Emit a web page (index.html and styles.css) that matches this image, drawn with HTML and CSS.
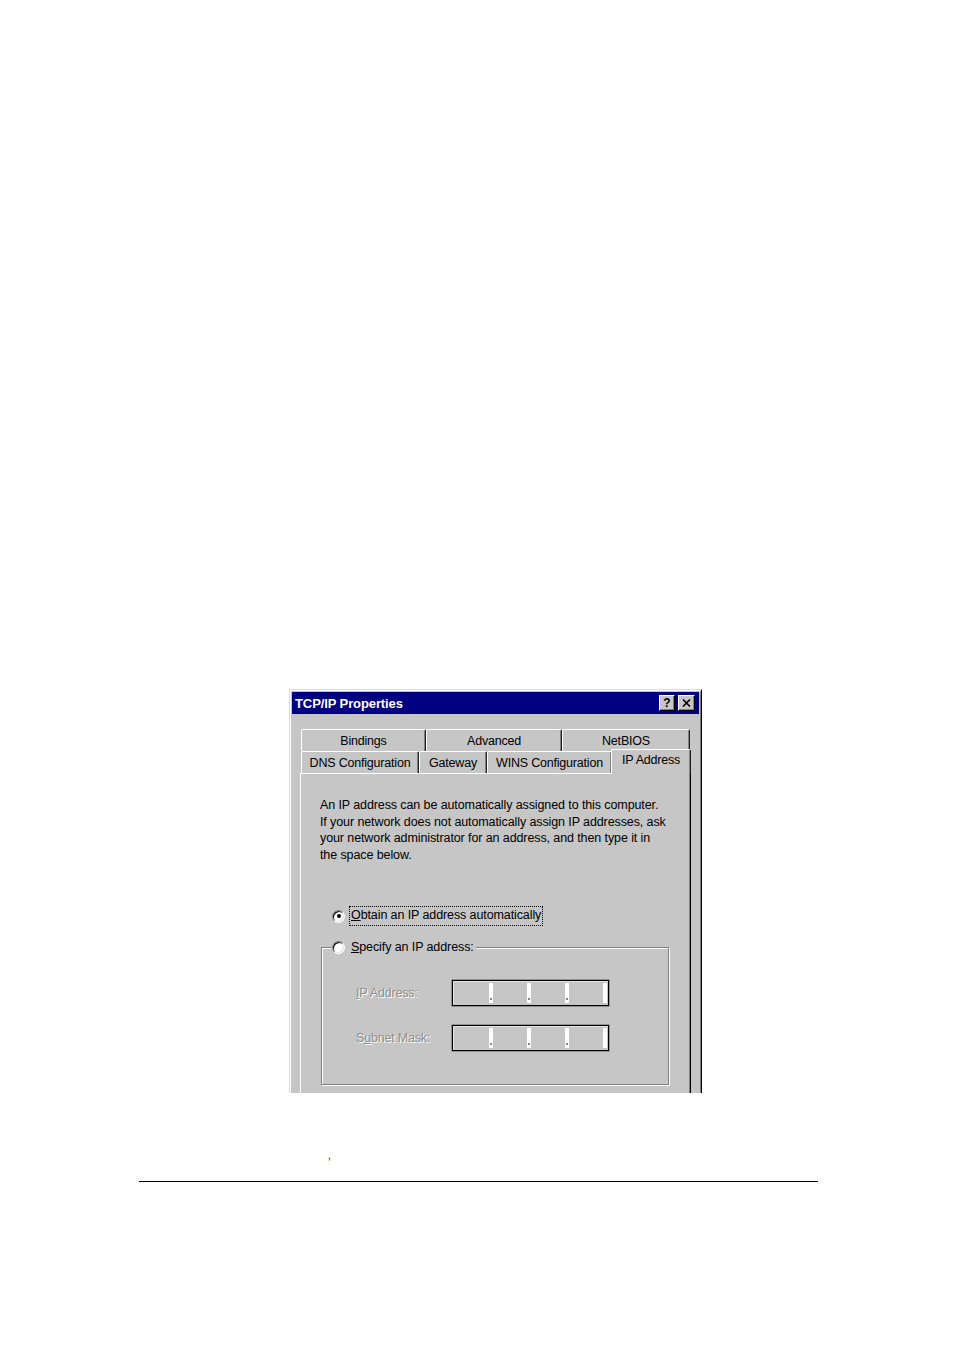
FILE: index.html
```html
<!DOCTYPE html>
<html>
<head>
<meta charset="utf-8">
<link rel="stylesheet" href="styles.css">
</head>
<body>
<div class="page">
  <div class="dialog">
    <div class="titlebar">
      <span class="title">TCP/IP Properties</span>
      <div class="tb-buttons">
        <span class="tb-btn help">?</span>
        <span class="tb-btn close"><svg width="9" height="8" viewBox="0 0 9 8"><path d="M1 0.5 L8 7.5 M8 0.5 L1 7.5" stroke="#000" stroke-width="1.6"/></svg></span>
      </div>
    </div>

    <div class="tabs">
      <div class="tab-row row1">
        <div class="tab w-bind">Bindings</div>
        <div class="tab w-adv">Advanced</div>
        <div class="tab w-net">NetBIOS</div>
      </div>
      <div class="tab-row row2">
        <div class="tab w-dns">DNS Configuration</div>
        <div class="tab w-gw">Gateway</div>
        <div class="tab w-wins">WINS Configuration</div>
        <div class="tab tab-active">IP Address</div>
      </div>
    </div>

    <div class="panel">
      <p class="intro">An IP address can be automatically assigned to this computer.<br>If your network does not automatically assign IP addresses, ask<br>your network administrator for an address, and then type it in<br>the space below.</p>

      <div class="radio-row first">
        <span class="radio checked"></span>
        <span class="focus-label"><u>O</u>btain an IP address automatically</span>
      </div>

      <fieldset class="group">
        <legend class="legend">
          <span class="radio"></span>
          <span class="plain-label"><u>S</u>pecify an IP address:</span>
        </legend>
        <div class="field-row r1">
          <span class="dis-label"><u>I</u>P Address:</span>
          <div class="ipbox">
            <span class="seg"></span><span class="dot"><i></i></span>
            <span class="seg"></span><span class="dot"><i></i></span>
            <span class="seg"></span><span class="dot"><i></i></span>
            <span class="seg"></span><span class="dot end"></span>
          </div>
        </div>
        <div class="field-row r2">
          <span class="dis-label">S<u>u</u>bnet Mask:</span>
          <div class="ipbox">
            <span class="seg"></span><span class="dot"><i></i></span>
            <span class="seg"></span><span class="dot"><i></i></span>
            <span class="seg"></span><span class="dot"><i></i></span>
            <span class="seg"></span><span class="dot end"></span>
          </div>
        </div>
      </fieldset>
    </div>
  </div>

  <div class="caption">,</div>
  <div class="rule"></div>
</div>
</body>
</html>
```

FILE: styles.css
```css
html, body {
  margin: 0;
  padding: 0;
  background: #ffffff;
}

.page {
  padding-top: 689px;
  font-family: "Liberation Sans", Arial, sans-serif;
}

.dialog {
  margin-left: 289px;
  width: 413px;
  height: 404px;
  box-sizing: border-box;
  background: #c6c6c6;
  border-top: 1px solid #dfdfdf;
  border-left: 1px solid #dfdfdf;
  border-right: 1px solid #000000;
  box-shadow: inset 1px 1px #ffffff, inset -1px 0 #808080;
  padding: 2px 2px 0 2px;
  overflow: hidden;
}

.titlebar {
  height: 22px;
  background: #000080;
  display: flex;
  align-items: center;
  justify-content: space-between;
  padding: 0 4px 0 3px;
}

.title {
  color: #ffffff;
  font-weight: bold;
  font-size: 13px;
  letter-spacing: -0.1px;
}

.tb-buttons {
  display: flex;
  gap: 3px;
}

.tb-btn {
  width: 16px;
  height: 16px;
  box-sizing: border-box;
  background: #c6c6c6;
  border: 1px solid;
  border-color: #ffffff #000000 #000000 #ffffff;
  box-shadow: inset -1px -1px #808080;
  display: flex;
  align-items: center;
  justify-content: center;
  font-size: 12px;
  font-weight: bold;
  color: #000;
  line-height: 1;
}

.tb-btn.close {
  width: 17px;
}

/* tabs */
.tabs {
  margin-top: 15px;
  margin-left: 9px;
  width: 390px;
}

.tab-row {
  display: flex;
  height: 22px;
}

.tab {
  box-sizing: border-box;
  height: 22px;
  background: #c6c6c6;
  border-top: 1px solid #ffffff;
  border-left: 1px solid #ffffff;
  border-right: 1px solid #202020;
  box-shadow: inset -1px 0 #808080;
  border-radius: 2px 2px 0 0;
  font-size: 12.5px;
  color: #000;
  display: flex;
  align-items: center;
  justify-content: center;
  padding-top: 1px;
  letter-spacing: -0.2px;
}

.w-bind { width: 125px; }
.w-adv { width: 136px; }
.w-net { width: 128px; }
.w-dns { width: 118px; }
.w-gw { width: 68px; }
.w-wins { width: 125px; }

.tab-active {
  position: relative;
  z-index: 1;
  width: 80px;
  height: 25px;
  margin-top: -2px;
  margin-left: -1px;
  align-items: flex-start;
  padding-top: 3px;
}

/* panel */
.panel {
  margin-left: 8px;
  width: 391px;
  height: 330px;
  box-sizing: border-box;
  border-top: 1px solid #ffffff;
  border-left: 1px solid #ffffff;
  border-right: 1px solid #000000;
  box-shadow: inset -1px 0 #808080;
  padding: 23px 4px 0 19px;
}

.intro {
  margin: 0;
  font-size: 12.5px;
  line-height: 16.5px;
  letter-spacing: -0.1px;
  color: #000;
  white-space: nowrap;
}

.radio-row {
  display: flex;
  align-items: center;
  margin-top: 43px;
  margin-left: 12px;
  height: 20px;
}

.radio {
  width: 13px;
  height: 13px;
  box-sizing: border-box;
  border-radius: 50%;
  background: #ffffff;
  border: 1px solid;
  border-color: #808080 #ffffff #ffffff #808080;
  box-shadow: inset 1px 1px #000000, inset -1px -1px #dfdfdf;
  display: inline-flex;
  align-items: center;
  justify-content: center;
  flex: none;
}

.radio.checked::after {
  content: "";
  width: 4px;
  height: 4px;
  border-radius: 50%;
  background: #000;
}

.focus-label {
  margin-left: 4px;
  padding: 1px 1px 2px 1px;
  border: 1px dotted #000;
  font-size: 12.5px;
  letter-spacing: -0.1px;
  line-height: 15px;
}

.plain-label {
  margin-left: 6px;
  font-size: 12.5px;
  letter-spacing: -0.1px;
  line-height: 15px;
}

/* group box */
.group {
  margin: 12px 0 0 1px;
  width: 348px;
  height: 147px;
  box-sizing: border-box;
  border: 1px solid #808080;
  box-shadow: inset 1px 1px #ffffff, 1px 1px #ffffff;
  padding: 0;
}

.legend {
  display: flex;
  align-items: center;
  margin-left: 9px;
  padding: 0 2px 0 1px;
  background: #c6c6c6;
  height: 18px;
}

.field-row {
  display: flex;
  align-items: center;
  margin-left: 34px;
}

.field-row.r1 { margin-top: 24px; }
.field-row.r2 { margin-top: 19px; }

.dis-label {
  width: 96px;
  font-size: 12.5px;
  letter-spacing: -0.2px;
  color: #8e8e8e;
  text-shadow: 1px 1px #ffffff;
}

.ipbox {
  width: 157px;
  height: 26px;
  box-sizing: border-box;
  border: 1px solid #000000;
  box-shadow: 0 0 0 0.5px #5a5a5a, inset 1px 1px #e4e4e4;
  padding: 2px 1px 2px 2px;
  display: flex;
  background: #c6c6c6;
}

.seg {
  width: 34px;
  height: 100%;
  background: #c6c6c6;
}

.dot {
  width: 4px;
  height: 100%;
  background: #ffffff;
  display: flex;
  align-items: flex-end;
  justify-content: center;
  padding-bottom: 3px;
  box-sizing: border-box;
}

.dot i {
  display: block;
  width: 2px;
  height: 2px;
  background: #8a8a8a;
}

.dot.end {
  width: 4px;
}

.caption {
  margin: 57px 0 0 328px;
  font-size: 10px;
  height: 14px;
  color: #000;
}

.rule {
  margin: 17px 0 0 139px;
  width: 679px;
  border-top: 1.3px solid #000000;
}
```
